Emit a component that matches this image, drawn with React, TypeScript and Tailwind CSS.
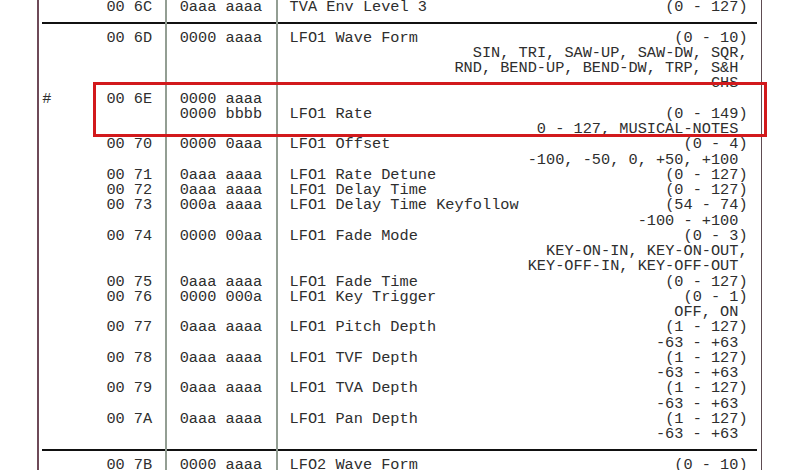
import React from 'react'

type Line =
  | 'sep'
  | {
      flag?: string
      addr?: string
      data?: string
      desc?: string
      range?: string
      val?: string
    }

// range = text that ends one column further right (ranges and lists with a trailing comma)
const lines: Line[] = [
  { addr: '00 6C', data: '0aaa aaaa', desc: 'TVA Env Level 3', range: '(0 - 127)' },
  'sep',
  { addr: '00 6D', data: '0000 aaaa', desc: 'LFO1 Wave Form', range: '(0 - 10)' },
  { range: 'SIN, TRI, SAW-UP, SAW-DW, SQR,' },
  { val: 'RND, BEND-UP, BEND-DW, TRP, S&H' },
  { val: 'CHS' },
  { flag: '#', addr: '00 6E', data: '0000 aaaa' },
  { data: '0000 bbbb', desc: 'LFO1 Rate', range: '(0 - 149)' },
  { val: '0 - 127, MUSICAL-NOTES' },
  { addr: '00 70', data: '0000 0aaa', desc: 'LFO1 Offset', range: '(0 - 4)' },
  { val: '-100, -50, 0, +50, +100' },
  { addr: '00 71', data: '0aaa aaaa', desc: 'LFO1 Rate Detune', range: '(0 - 127)' },
  { addr: '00 72', data: '0aaa aaaa', desc: 'LFO1 Delay Time', range: '(0 - 127)' },
  { addr: '00 73', data: '000a aaaa', desc: 'LFO1 Delay Time Keyfollow', range: '(54 - 74)' },
  { val: '-100 - +100' },
  { addr: '00 74', data: '0000 00aa', desc: 'LFO1 Fade Mode', range: '(0 - 3)' },
  { range: 'KEY-ON-IN, KEY-ON-OUT,' },
  { val: 'KEY-OFF-IN, KEY-OFF-OUT' },
  { addr: '00 75', data: '0aaa aaaa', desc: 'LFO1 Fade Time', range: '(0 - 127)' },
  { addr: '00 76', data: '0000 000a', desc: 'LFO1 Key Trigger', range: '(0 - 1)' },
  { val: 'OFF, ON' },
  { addr: '00 77', data: '0aaa aaaa', desc: 'LFO1 Pitch Depth', range: '(1 - 127)' },
  { val: '-63 - +63' },
  { addr: '00 78', data: '0aaa aaaa', desc: 'LFO1 TVF Depth', range: '(1 - 127)' },
  { val: '-63 - +63' },
  { addr: '00 79', data: '0aaa aaaa', desc: 'LFO1 TVA Depth', range: '(1 - 127)' },
  { val: '-63 - +63' },
  { addr: '00 7A', data: '0aaa aaaa', desc: 'LFO1 Pan Depth', range: '(1 - 127)' },
  { val: '-63 - +63' },
  'sep',
  { addr: '00 7B', data: '0000 aaaa', desc: 'LFO2 Wave Form', range: '(0 - 10)' },
]

const col1 = 'flex w-[128px] shrink-0 border-l-2 border-[#6e4a58]'
const col2 = 'flex w-[111px] shrink-0 border-l-2 border-[#939e93]'
const col3 = 'flex w-[486px] shrink-0 border-l-2 border-r border-l-[#939e93] border-r-[#5e4c52]'

const Separator = () => (
  <div className="flex h-[15.25px]">
    <div className={`${col1} items-center pl-[3.3px]`}>
      <div className="h-[1.5px] w-full bg-[#111]" />
    </div>
    <div className={`${col2} items-center`}>
      <div className="h-[1.5px] w-full bg-[#111]" />
    </div>
    <div className={`${col3} items-center pr-[4.3px]`}>
      <div className="h-[1.5px] w-full bg-[#111]" />
    </div>
  </div>
)

const App = () => {
  return (
    <div className="relative h-[470px] w-[810px] overflow-hidden bg-white">
      <div
        className="ml-[37px] whitespace-pre text-[15.27px] leading-[15.25px] text-[#2e2e2e]"
        style={{ fontFamily: '"Liberation Mono", "DejaVu Sans Mono", monospace' }}
      >
        {lines.map((line, i) =>
          line === 'sep' ? (
            <Separator key={i} />
          ) : (
            <div key={i} className="flex h-[15.25px]">
              <div className={`${col1} pl-[3.3px]`}>
                <span className="w-[64.1px] shrink-0">{line.flag ?? ''}</span>
                <span>{line.addr ?? ''}</span>
              </div>
              <div className={`${col2} pl-[12.7px]`}>{line.data ?? ''}</div>
              <div className={`${col3} justify-between pl-[11.6px]`}>
                <span>{line.desc ?? ''}</span>
                {line.range && <span className="pr-[13.4px]">{line.range}</span>}
                {line.val && <span className="pr-[22.6px]">{line.val}</span>}
              </div>
            </div>
          ),
        )}
      </div>
      {/* highlight box drawn over the LFO1 Rate entry */}
      <div className="absolute left-[93px] top-[82px] h-[55px] w-[674px] border-[3px] border-[#d2191c]" />
    </div>
  )
}

export default App
